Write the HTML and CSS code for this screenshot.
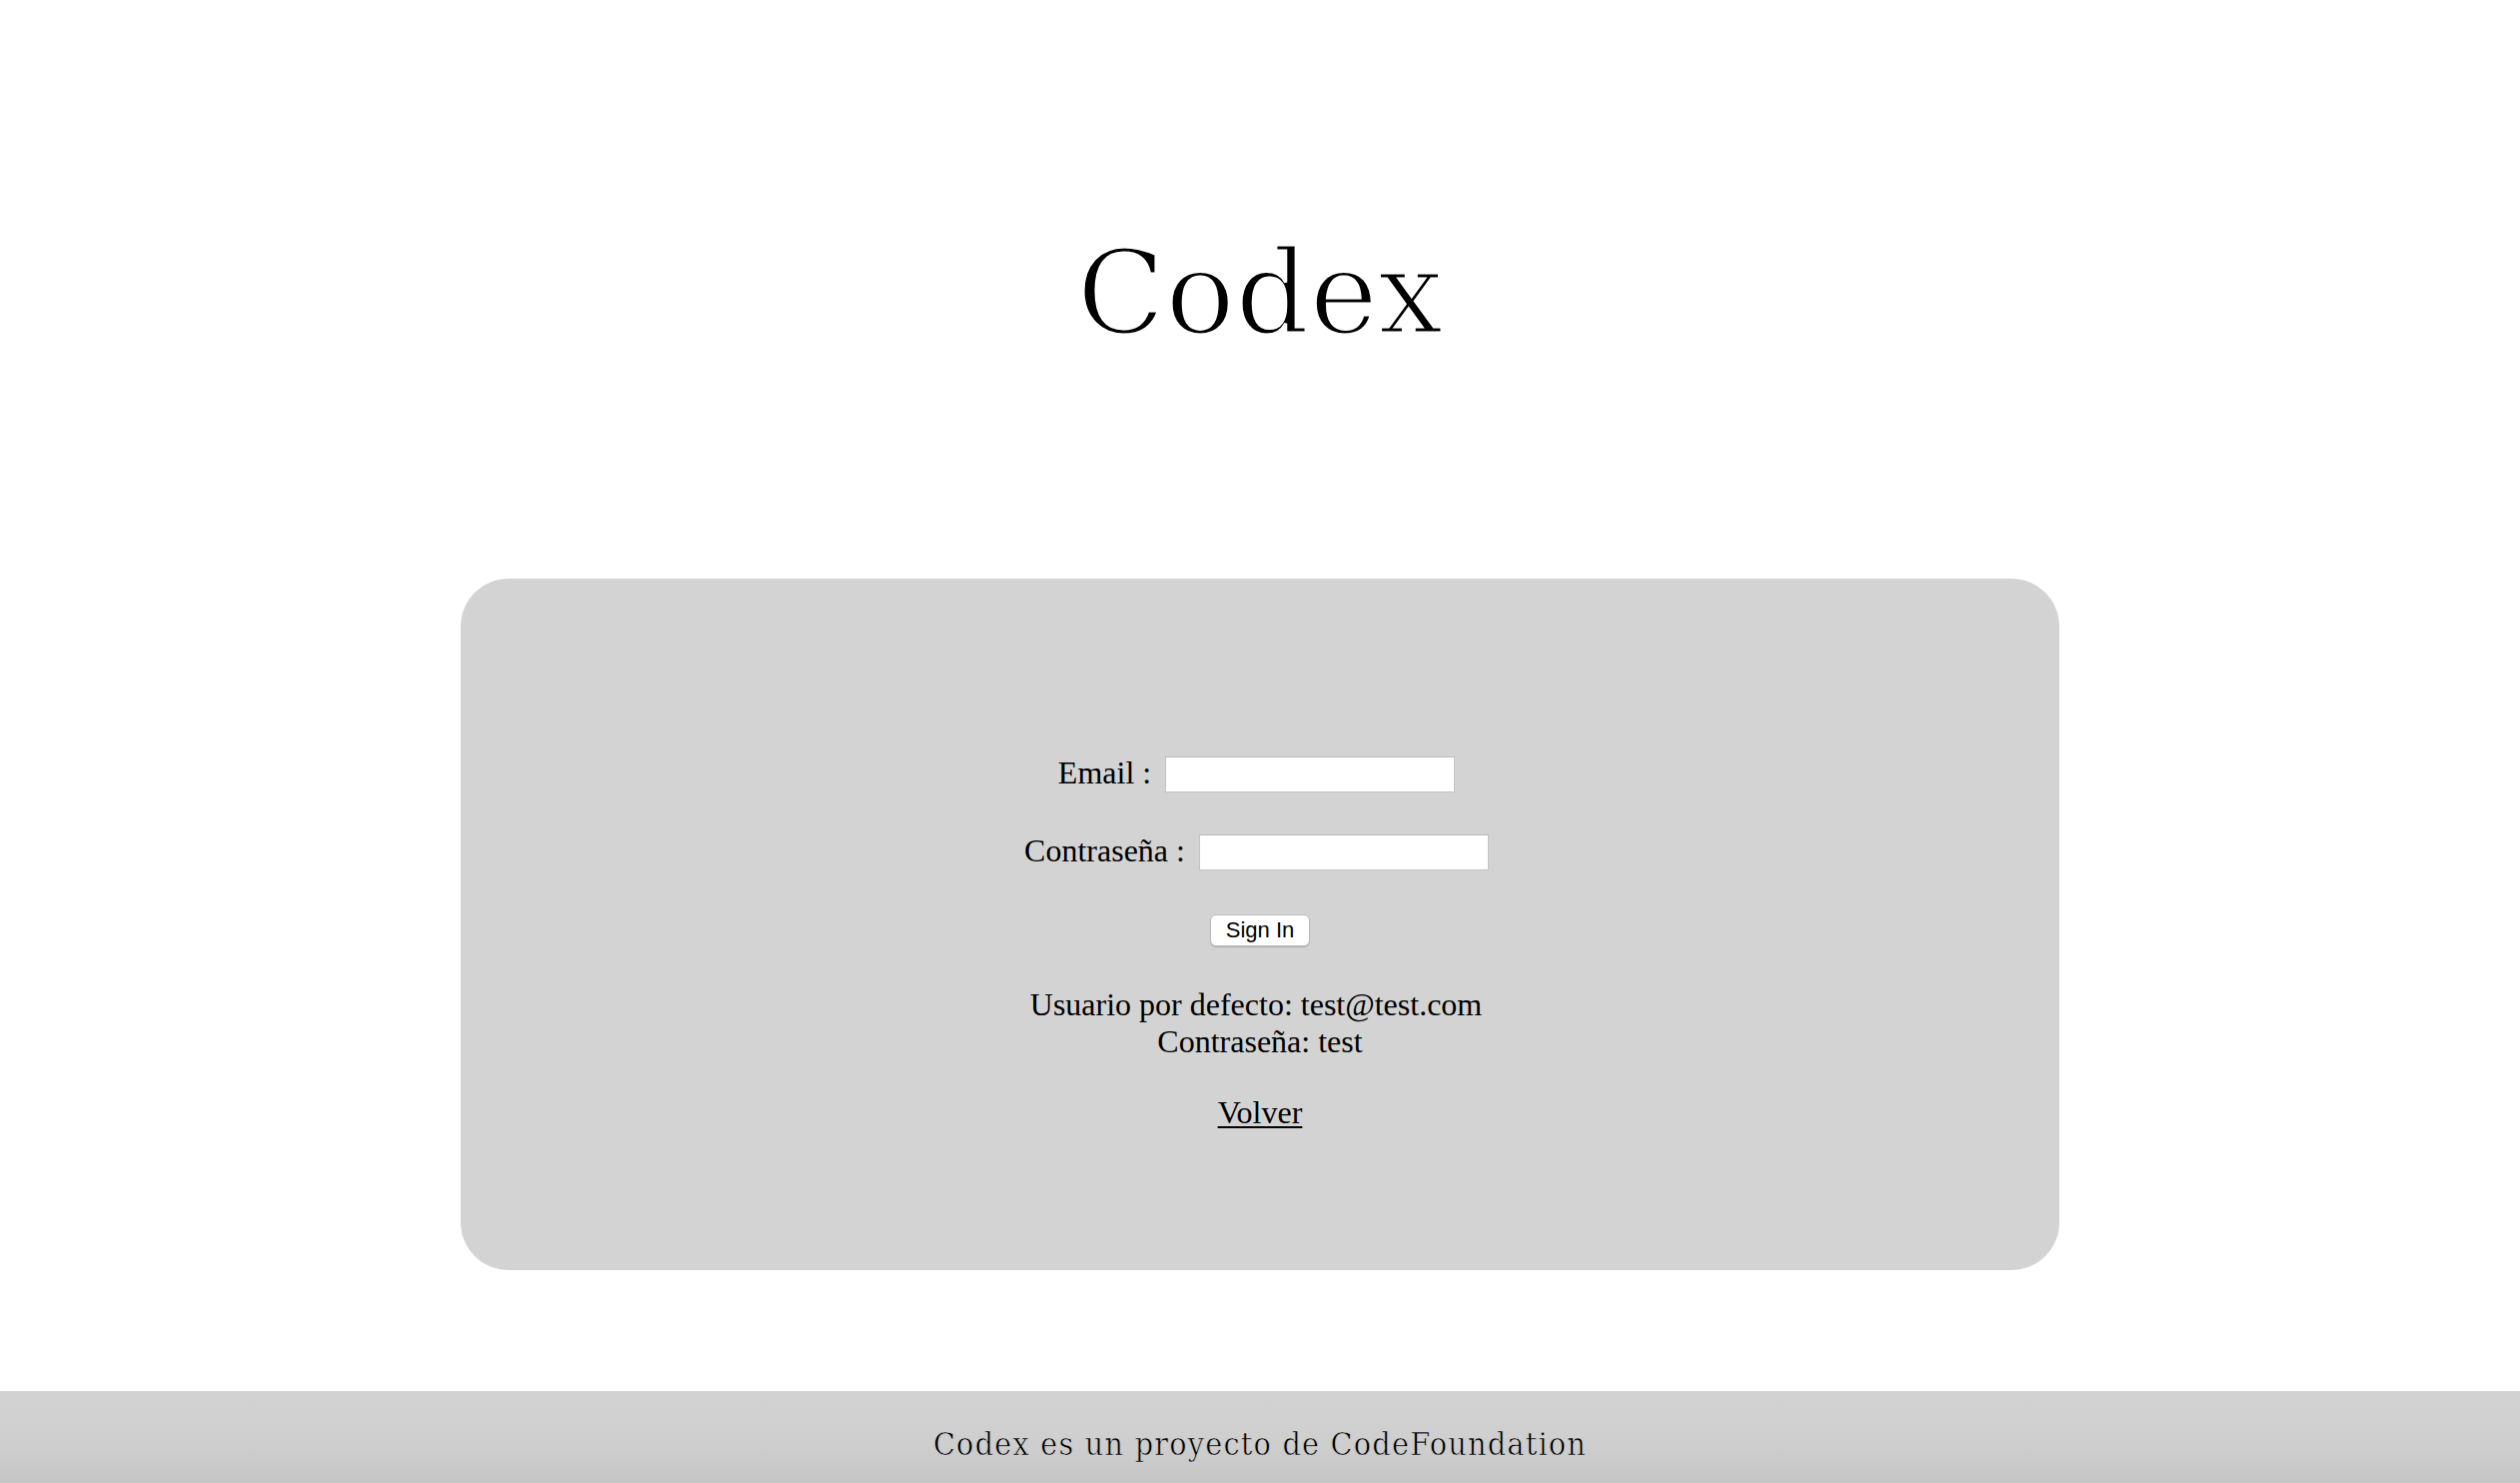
FILE: index.html
```html
<!DOCTYPE html>
<html lang="es">
<head>
<meta charset="utf-8">
<title>Codex</title>
<link rel="stylesheet" href="styles.css">
</head>
<body>
<header class="masthead">
  <h1 class="brand">Codex</h1>
</header>
<main class="panel">
  <form class="login-form">
    <div class="field-row">
      <label class="field-label" for="email">Email :</label>
      <input class="field-input" type="text" id="email">
    </div>
    <div class="field-row field-row-second">
      <label class="field-label" for="pass">Contraseña :</label>
      <input class="field-input" type="password" id="pass">
    </div>
    <div class="action-row">
      <button class="signin-btn" type="button">Sign In</button>
    </div>
    <p class="hint"><span class="hint-first">Usuario por defecto: test@test.com</span><br>Contraseña: test</p>
    <p class="back"><a class="back-link" href="#">Volver</a></p>
  </form>
</main>
<footer class="site-footer">Codex es un proyecto de CodeFoundation</footer>
</body>
</html>
```
FILE: styles.css
```css
html, body {
  margin: 0;
  padding: 0;
  background: #ffffff;
}

body {
  font-family: "Liberation Serif", "Times New Roman", serif;
  font-size: 32px;
  color: #000;
}

.masthead {
  padding-top: 234px;
  display: flex;
  justify-content: center;
}

.brand {
  margin: 0;
  font-family: "DejaVu Serif", serif;
  font-weight: normal;
  font-size: 116px;
  line-height: 117px;
  color: #000;
  -webkit-text-stroke: 3px #ffffff;
}

.panel {
  box-sizing: border-box;
  width: 1600px;
  height: 692px;
  margin: 228px auto 0;
  background: #d3d3d3;
  border-radius: 48px;
  padding-top: 177px;
}

.login-form {
  display: flex;
  flex-direction: column;
  align-items: center;
  line-height: 37px;
}

.field-row {
  display: flex;
  align-items: center;
  height: 38px;
}

.field-row-second {
  margin-top: 40px;
}

.field-label {
  line-height: 37px;
  margin-top: -3px;
}

.field-input {
  box-sizing: border-box;
  width: 290px;
  height: 36px;
  margin: 0 7px 0 14px;
  background: #fff;
  border: 1px solid #c3c3c3;
  border-top-color: #b9b9b9;
  padding: 0 6px;
  font-size: 22px;
  outline: none;
}

.action-row {
  margin-top: 43px;
  display: flex;
  justify-content: center;
}

.signin-btn {
  box-sizing: border-box;
  width: 100px;
  height: 32px;
  padding: 0;
  background: #ffffff;
  border: 1px solid #bdbdbd;
  border-radius: 6px;
  box-shadow: 0 1px 1px rgba(0, 0, 0, 0.18);
  font-family: "Liberation Sans", Arial, sans-serif;
  font-size: 22px;
  color: #000;
  line-height: 30px;
}

.hint {
  margin: 40px 0 0;
  text-align: center;
  line-height: 37px;
}

.hint-first {
  padding-right: 8px;
}

.back {
  margin: 34px 0 0;
  line-height: 37px;
}

.back-link {
  color: #000;
  text-decoration: underline;
  text-decoration-thickness: 2px;
  text-underline-offset: 3px;
}

.site-footer {
  box-sizing: border-box;
  margin-top: 121px;
  height: 92px;
  padding-top: 11px;
  line-height: 84px;
  text-align: center;
  font-family: "DejaVu Serif Condensed", "DejaVu Serif", serif;
  font-stretch: condensed;
  font-size: 32px;
  letter-spacing: 1.2px;
  color: #000;
  -webkit-text-stroke: 0.6px #cfcfcf;
  background: linear-gradient(180deg, #d3d3d3 0%, #cecece 60%, #c5c5c5 100%);
}
```
